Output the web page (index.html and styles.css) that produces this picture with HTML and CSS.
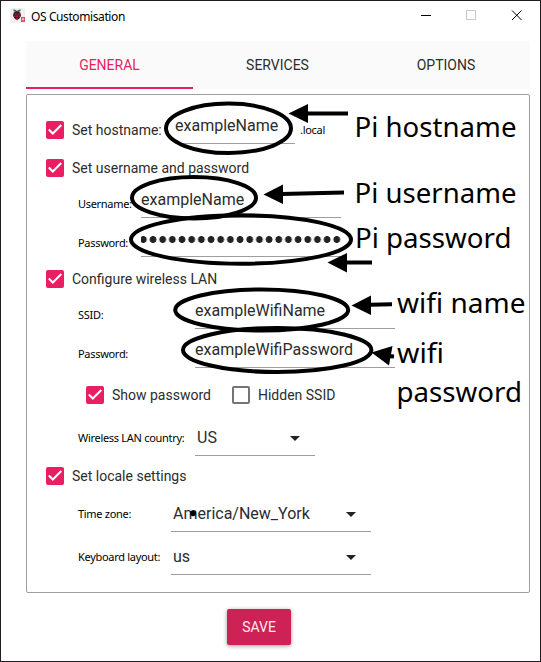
FILE: index.html
```html
<!DOCTYPE html>
<html lang="en">
<head>
<meta charset="utf-8">
<title>OS Customisation</title>
<link rel="stylesheet" href="styles.css">
</head>
<body>
<svg class="defs" width="0" height="0" aria-hidden="true">
  <symbol id="tick" viewBox="0 0 18 18"><path d="M2.800 8.500 L6.800 12.500 L15.300 4" fill="none" stroke="#fff" stroke-width="2"/></symbol>
  <symbol id="caret" viewBox="0 0 10 5"><path d="M0 0H10L5 5Z" fill="#222"/></symbol>
</svg>
<div class="window">
  <header class="titlebar">
    <svg class="logo" viewBox="0 0 15 15">
      <rect width="15" height="15" rx="2" fill="#efefef"/>
      <path d="M3 1.5Q6 1 7 3Q8 1 11 1.5Q10.5 4 7 4.3Q3.5 4 3 1.5Z" fill="#347b45"/>
      <path d="M4 4.2Q7 2.7 10 4.2L11 7Q10.5 10.5 7 12Q3.5 10.5 3 7Z" fill="#3c1526"/>
      <path d="M5 5.2h1.6v1.5H5zM7.6 5.2h1.6v1.5H7.6zM4 7.5h1.4v1.5H4zM6.2 7.6h1.7v1.6H6.2zM8.7 7.5h1.4v1.5H8.7zM6.2 10h1.6v1H6.2z" fill="#a91f4b"/>
      <rect x="11" y="9" width="4" height="5" fill="#d8546e"/>
      <path d="M12.2 10.2h1.5v2h-1.5z" fill="#f8dce2"/>
    </svg>
    <h1 class="title">OS Customisation</h1>
    <svg class="controls" viewBox="0 0 101 11" shape-rendering="crispEdges">
      <path d="M0 5.5H10" stroke="#000"/>
      <rect x="45.5" y=".5" width="9" height="9" fill="none" stroke="#c8c8c8"/>
      <path d="M91 .5L100.5 10M100.5 .5L91 10" stroke="#000" shape-rendering="auto"/>
    </svg>
  </header>
  <nav class="tabs">
    <span class="tab active">GENERAL</span>
    <span class="tab">SERVICES</span>
    <span class="tab">OPTIONS</span>
  </nav>
  <main class="panel">
    <div class="row host">
      <span class="check"><svg><use href="#tick"/></svg></span><span class="opt">Set hostname:</span>
      <span class="field f-host">exampleName</span><span class="small suffix">.local</span>
    </div>
    <div class="row user-check"><span class="check"><svg><use href="#tick"/></svg></span><span class="opt">Set username and password</span></div>
    <div class="row sub"><span class="small w63">Username:</span><span class="field">exampleName</span></div>
    <div class="row sub"><span class="small w63">Password:</span><span class="field"><span class="dots"></span></span></div>
    <div class="row wifi-check"><span class="check"><svg><use href="#tick"/></svg></span><span class="opt">Configure wireless LAN</span></div>
    <div class="row sub"><span class="small w117">SSID:</span><span class="field">exampleWifiName</span></div>
    <div class="row sub"><span class="small w117">Password:</span><span class="field">exampleWifiPassword</span></div>
    <div class="row toggles">
      <span class="check"><svg><use href="#tick"/></svg></span><span class="opt">Show password</span>
      <span class="check off"></span><span class="opt">Hidden SSID</span>
    </div>
    <div class="row sub country"><span class="small w117">Wireless LAN country:</span><span class="field select narrow">US<svg class="caret"><use href="#caret"/></svg></span></div>
    <div class="row locale-check"><span class="check"><svg><use href="#tick"/></svg></span><span class="opt">Set locale settings</span></div>
    <div class="row sub locale"><span class="small w93">Time zone:</span><span class="field select">America/New_York<svg class="caret"><use href="#caret"/></svg></span></div>
    <div class="row sub locale"><span class="small w93">Keyboard layout:</span><span class="field select">us<svg class="caret"><use href="#caret"/></svg></span></div>
  </main>
  <button class="save">SAVE</button>
</div>
<svg class="notes" viewBox="0 0 541 662">
  <g fill="none" stroke="#000" stroke-width="4">
    <ellipse cx="228.5" cy="128.3" rx="62.5" ry="24.700"/>
    <ellipse cx="194" cy="197.700" rx="62" ry="20.700"/>
    <ellipse cx="241" cy="239.5" rx="110" ry="24.200"/>
    <ellipse cx="261.7" cy="310" rx="86.500" ry="20.5"/>
    <ellipse cx="277.2" cy="350" rx="94.200" ry="22"/>
    <path d="M306 113.5H348M281 194L344 192.5M346 262.5H372M370 304.7L392 304.2M388 356L394 356.5"/>
  </g>
  <path d="M288.500 113.5L308 104V123ZM263.500 194.5L283 184.500V204ZM327.500 262.5L347 253V272.500ZM351.500 305.5L371 295.500V315ZM371.500 352.5L392.500 346L389 365.500Z"/>
  <circle cx="193" cy="513.5" r="2.8"/>
  <g class="note-text">
    <text x="354.500" y="137" textLength="162" lengthAdjust="spacingAndGlyphs">Pi hostname</text>
    <text x="354.500" y="203" textLength="162" lengthAdjust="spacingAndGlyphs">Pi username</text>
    <text x="355" y="248" textLength="156.500" lengthAdjust="spacingAndGlyphs">Pi password</text>
    <text x="397" y="313" textLength="128.500" lengthAdjust="spacingAndGlyphs">wifi name</text>
    <text x="397" y="363" textLength="47" lengthAdjust="spacingAndGlyphs">wifi</text>
    <text x="396.500" y="402" textLength="125.500" lengthAdjust="spacingAndGlyphs">password</text>
  </g>
</svg>
</body>
</html>
```
FILE: styles.css
```css
* { box-sizing: border-box; }
body { margin: 0; width: 541px; height: 662px; position: relative; overflow: hidden; background: #211d20; font-family: Roboto, sans-serif; color: #2c2c2c; }
.defs { position: absolute; }
.window { height: 660px; margin: 1px 1px 0; background: #fff; display: flex; flex-direction: column; }
.titlebar { display: flex; height: 40px; padding: 7px 18px 0 9px; }
.logo { width: 15px; height: 15px; }
.title { margin: 0 0 0 6px; font: 12px/17px "Noto Sans", sans-serif; color: #000; letter-spacing: -.4px; }
.controls { width: 101px; height: 11px; margin: 2px 0 0 auto; }
.tabs { display: grid; grid-template-columns: 167px 169px 168px; height: 48px; margin: 0 10px 0 25px; background: #fafafa; font-size: 14px; line-height: 48px; text-align: center; flex: none; }
.tab { height: 48px; }
.tab.active { color: #e91e63; border-bottom: 2px solid #e91e63; }
.panel { height: 499px; margin: 5px 10px 0 25px; border: 1px solid #9e9e9e; border-radius: 2px; padding-top: 15px; flex: none; }
.row { display: flex; align-items: center; padding-left: 19px; font-size: 14px; white-space: nowrap; }
.check { width: 18px; height: 18px; border-radius: 2px; background: #e91e63; flex: none; }
.check svg { display: block; width: 18px; height: 18px; }
.check.off { background: none; border: 2px solid #757575; }
.opt { margin-left: 8px; }
.field { width: 200px; height: 34px; border-bottom: 1px solid #9e9e9e; font-size: 16px; line-height: 32px; overflow: hidden; flex: none; align-self: flex-start; }
.small { font: 11px/14px "Noto Sans", sans-serif; color: #000; letter-spacing: -.3px; }
.host { height: 40px; }
.host .opt { width: 95px; }
.f-host { width: 120px; margin-left: 8px; }
.suffix { margin-left: 5px; }
.user-check { height: 32px; margin-top: 2px; }
.sub { height: 39px; padding-left: 51px; }
.wifi-check { height: 33px; padding-top: 1px; }
.w63 { width: 63px; }
.w117 { width: 117px; }
.w93 { width: 93px; }
.dots { display: block; height: 33px; background: radial-gradient(circle at 50% 50%, #222 3.1px, transparent 3.700px) -2.500px 0 / 9.680px 33px repeat-x; }
.toggles { height: 44px; padding-left: 59px; }
.toggles .off { margin-left: 21px; }
.country { height: 38px; margin-top: 5px; align-items: flex-start; }
.country .small, .locale .small { line-height: 32px; }
.locale-check { height: 32px; }
.locale { height: 43px; align-items: flex-start; }
.locale-check + .locale { margin-top: 6px; }
.select { display: flex; align-items: center; padding: 0 15px 1px 2px; }
.narrow { width: 120px; }
.caret { width: 10px; height: 5px; margin-left: auto; }
.save { width: 64px; height: 36px; margin: 16px 0 0 226px; padding: 0; border: 0; border-radius: 2px; background: #ce2155; color: #fbe9ef; font: 14px/36px Roboto, sans-serif; box-shadow: 0 1px 4px rgba(0, 0, 0, .4); flex: none; }
.notes { position: absolute; inset: 0; width: 541px; height: 662px; pointer-events: none; }
.note-text { font: 28px "Noto Sans", sans-serif; fill: #000; }
```
